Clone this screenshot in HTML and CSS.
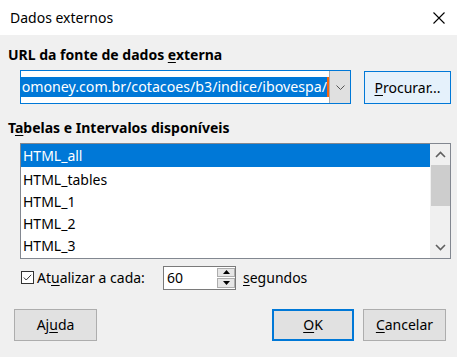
FILE: index.html
```html
<!DOCTYPE html>
<html lang="pt">
<head>
<meta charset="utf-8">
<title>Dados externos</title>
<link rel="stylesheet" href="styles.css">
</head>
<body>
<div class="dialog">
  <div class="titlebar">
    <span class="title">Dados externos</span>
    <svg class="close" width="12" height="12" viewBox="0 0 12 12"><path d="M0.5 0.5 L11.5 11.5 M11.5 0.5 L0.5 11.5" stroke="#000" stroke-width="1.1" fill="none"/></svg>
  </div>
  <div class="content">
    <div class="label">URL da fonte de dados <u>e</u>xterna</div>
    <div class="url-row">
      <div class="combo">
        <div class="combo-field"><div class="sel"><span class="sel-text">omoney.com.br/cotacoes/b3/indice/ibovespa/</span></div><span class="caret"></span></div>
        <div class="combo-btn"><svg width="9" height="5" viewBox="0 0 9 5"><path d="M0.5 0.5 L4.5 4.5 L8.5 0.5" stroke="#555" stroke-width="1" fill="none"/></svg></div>
      </div>
      <div class="btn btn-hover"><u>P</u>rocurar...</div>
    </div>
    <div class="label label2">T<u>a</u>belas e Intervalos disponíveis</div>
    <div class="listbox">
      <div class="items">
        <div class="item selected">HTML_all</div>
        <div class="item">HTML_tables</div>
        <div class="item">HTML_1</div>
        <div class="item">HTML_2</div>
        <div class="item">HTML_3</div>
      </div>
      <div class="scrollbar">
        <div class="arrow"><svg width="11" height="7" viewBox="0 0 11 7"><path d="M1 6 L5.5 1.5 L10 6" stroke="#606060" stroke-width="1.6" fill="none"/></svg></div>
        <div class="track"><div class="thumb"></div></div>
        <div class="arrow"><svg width="11" height="7" viewBox="0 0 11 7"><path d="M1 1 L5.5 5.5 L10 1" stroke="#606060" stroke-width="1.6" fill="none"/></svg></div>
      </div>
    </div>
    <div class="refresh-row">
      <div class="check"><svg width="13" height="13" viewBox="0 0 13 13"><rect x="0.5" y="0.5" width="12" height="12" fill="#fff" stroke="#333"/><path d="M2.8 6.5 L5.2 9 L10.2 3.8" stroke="#333" stroke-width="1" fill="none"/></svg></div>
      <span class="check-label">At<u>u</u>alizar a cada:</span>
      <div class="spin">
        <span class="spin-value">60</span>
        <div class="spin-btns">
          <div class="spin-btn"><svg width="7" height="4" viewBox="0 0 7 4"><path d="M0 4 L3.5 0 L7 4 Z" fill="#000"/></svg></div>
          <div class="spin-btn"><svg width="7" height="4" viewBox="0 0 7 4"><path d="M0 0 L3.5 4 L7 0 Z" fill="#000"/></svg></div>
        </div>
      </div>
      <span class="unit"><u>s</u>egundos</span>
    </div>
    <div class="button-row">
      <div class="btn btn-std">Aj<u>u</u>da</div>
      <div class="spacer"></div>
      <div class="btn btn-std btn-default"><u>O</u>K</div>
      <div class="btn btn-std"><u>C</u>ancelar</div>
    </div>
  </div>
</div>
</body>
</html>
```
FILE: styles.css
```css
* { box-sizing: border-box; }
html, body { margin: 0; padding: 0; }
body {
  width: 457px;
  height: 357px;
  background: #f0f0f0;
  font-family: "Noto Sans", "Open Sans", sans-serif;
  font-size: 14px;
  color: #000;
  overflow: hidden;
}
u { text-decoration: underline; text-underline-offset: 2px; text-decoration-thickness: 1px; }
.dialog { width: 457px; height: 357px; display: flex; flex-direction: column; }
.titlebar {
  height: 35px;
  background: #fff;
  display: flex;
  align-items: center;
  padding: 0 12px 0 10px;
  flex: none;
}
.title { flex: 1; font-size: 14px; line-height: 20px; }
.close { display: block; }
.content { padding: 0 6px 0 8px; display: flex; flex-direction: column; }
.label { font-weight: bold; font-size: 14px; line-height: 20px; margin-top: 10px; }
.label2 { margin-top: 14px; }
.url-row { display: flex; margin-top: 5px; margin-left: 12px; height: 34px; }
.combo {
  width: 331px;
  height: 34px;
  border: 1px solid #0078d7;
  background: #fff;
  display: flex;
}
.combo-field {
  flex: 1;
  min-width: 0;
  overflow: hidden;
  display: flex;
  align-items: center;
  white-space: nowrap;
}
.sel {
  background: #0078d7;
  color: #fff;
  font-size: 14.2px;
  line-height: 20px;
  height: 20px;
  flex: 1;
  min-width: 0;
  overflow: hidden;
  display: flex;
  justify-content: flex-end;
}
.sel-text { flex: none; }
.caret { width: 2px; height: 20px; background: #f7630c; flex: none; }
.combo-btn {
  width: 21px;
  flex: none;
  background: #e0e0e0;
  border-left: 1px solid #adadad;
  display: flex;
  align-items: center;
  justify-content: center;
}
.combo-btn svg { display: block; }
.btn {
  display: flex;
  align-items: center;
  justify-content: center;
  line-height: 20px;
}
.btn-hover {
  margin-left: 13px;
  width: 87px;
  height: 33px;
  margin-top: 1px;
  background: #e5f1fb;
  border: 1px solid #0078d7;
}
.listbox {
  margin-top: 5px;
  margin-left: 12px;
  width: 431px;
  height: 116px;
  border: 1px solid #828790;
  background: #fff;
  display: flex;
}
.items { flex: 1; overflow: hidden; }
.item { line-height: 22px; padding: 2px 0 0 2px; box-sizing: content-box; height: 20px; }
.item.selected { background: #0078d7; color: #fff; height: 22px; padding-top: 1px; }
.scrollbar {
  width: 20px;
  background: #f0f0f0;
  display: flex;
  flex-direction: column;
}
.arrow { height: 21px; display: flex; align-items: center; justify-content: center; }
.arrow svg { display: block; }
.track { flex: 1; padding: 0 0 0 1px; }
.thumb { height: 41px; background: #cdcdcd; }
.refresh-row {
  margin-top: 7px;
  margin-left: 13px;
  height: 23px;
  display: flex;
  align-items: center;
}
.check { width: 13px; height: 13px; margin-right: 3px; }
.check svg { display: block; }
.check-label { width: 126px; line-height: 20px; }
.spin {
  width: 73px;
  height: 24px;
  border: 1px solid #7a7a7a;
  background: #fff;
  display: flex;
}
.spin-value { flex: 1; line-height: 22px; padding-left: 3px; }
.spin-btns { width: 18px; display: flex; flex-direction: column; gap: 1px; padding: 1px 0; }
.spin-btn {
  flex: 1;
  background: #e6e6e6;
  border: 1px solid #adadad;
  display: flex;
  align-items: center;
  justify-content: center;
}
.spin-btn svg { display: block; }
.unit { margin-left: 7px; line-height: 20px; }
.button-row { display: flex; margin-top: 20px; margin-left: 6px; height: 32px; }
.spacer { flex: 1; }
.btn-std {
  width: 83px;
  height: 32px;
  background: #e1e1e1;
  border: 1px solid #adadad;
}
.btn-default { border: 2px solid #0078d7; width: 82px; margin-right: 9px; }
.button-row .btn-std:last-child { margin-right: 5px; }
```
